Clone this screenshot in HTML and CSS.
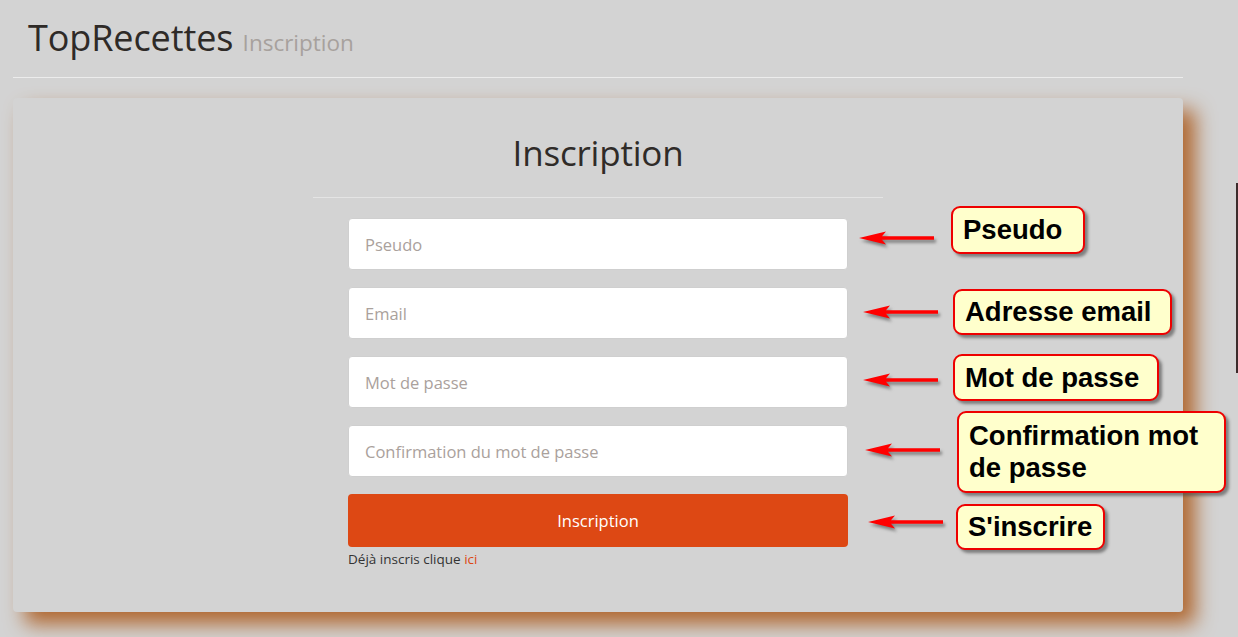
FILE: index.html
```html
<!DOCTYPE html>
<html lang="fr">
<head>
<meta charset="utf-8">
<title>TopRecettes - Inscription</title>
<link rel="stylesheet" href="styles.css">
</head>
<body>
<header class="page-header">
  <h1 class="brand">TopRecettes <small class="brand-sub">Inscription</small></h1>
</header>

<main class="card">
  <h2 class="card-title">Inscription</h2>
  <hr class="card-rule">
  <form class="signup">
    <input class="field" type="text" placeholder="Pseudo">
    <input class="field" type="email" placeholder="Email">
    <input class="field" type="password" placeholder="Mot de passe">
    <input class="field" type="password" placeholder="Confirmation du mot de passe">
    <button class="submit" type="button">Inscription</button>
    <p class="already">Déjà inscris clique <a class="link" href="#">ici</a></p>
  </form>
</main>

<div class="notes">
  <svg class="arrow a1" viewBox="0 0 84 22" width="84" height="22"><polygon points="1,8 28,1.5 24,6.3 76,6.3 76,9.7 24,9.7 28,14.5"/></svg>
  <svg class="arrow a2" viewBox="0 0 84 22" width="84" height="22"><polygon points="1,8 28,1.5 24,6.3 76,6.3 76,9.7 24,9.7 28,14.5"/></svg>
  <svg class="arrow a3" viewBox="0 0 84 22" width="84" height="22"><polygon points="1,8 28,1.5 24,6.3 76,6.3 76,9.7 24,9.7 28,14.5"/></svg>
  <svg class="arrow a4" viewBox="0 0 84 22" width="84" height="22"><polygon points="1,8 28,1.5 24,6.3 76,6.3 76,9.7 24,9.7 28,14.5"/></svg>
  <svg class="arrow a5" viewBox="0 0 84 22" width="84" height="22"><polygon points="1,8 28,1.5 24,6.3 76,6.3 76,9.7 24,9.7 28,14.5"/></svg>

  <div class="callout c1">Pseudo</div>
  <div class="callout c2">Adresse email</div>
  <div class="callout c3">Mot de passe</div>
  <div class="callout c4">Confirmation mot de passe</div>
  <div class="callout c5">S'inscrire</div>
</div>

<div class="edge-line"></div>
</body>
</html>
```

FILE: styles.css
```css
* { box-sizing: border-box; }

html, body {
  margin: 0;
  padding: 0;
  background: #d3d3d3;
}

body {
  position: relative;
  width: 1238px;
  height: 637px;
  overflow: hidden;
  font-family: "Open Sans", "Noto Sans", sans-serif;
  color: #333;
}

/* header */
.page-header {
  width: 1170px;
  margin: 0 0 0 13px;
  padding: 18px 15px 19px;
  border-bottom: 1px solid #ececec;
}

.brand {
  margin: 0;
  height: 40px;
  font-size: 36px;
  line-height: 40px;
  font-weight: 400;
  color: #2e2a27;
  letter-spacing: -0.1px;
}

.brand-sub {
  font-size: 22.5px;
  line-height: 1;
  color: #a7a19d;
  letter-spacing: 0;
}

/* card */
.card {
  width: 1170px;
  height: 514px;
  margin: 20px 0 0 13px;
  padding-top: 35px;
  background: #d3d3d3;
  border-radius: 4px;
  box-shadow: 12px 12px 20px #b0672f;
  display: flex;
  flex-direction: column;
  align-items: center;
}

.card-title {
  margin: 0;
  font-size: 35px;
  line-height: 40px;
  font-weight: 400;
  color: #2f2b28;
  letter-spacing: -0.2px;
}

.card-rule {
  width: 570px;
  margin: 24px 0 20px;
  border: 0;
  border-top: 1px solid #e4e4e4;
}

.signup {
  width: 500px;
  display: flex;
  flex-direction: column;
}

.field {
  height: 52px;
  margin: 0 0 17px;
  padding: 0 16px;
  border: 1px solid #cfcfcf;
  border-radius: 4px;
  background: #fff;
  font-family: inherit;
  font-size: 16.5px;
  color: #333;
  outline: none;
}

.field::placeholder {
  color: #aaa19c;
}

.submit {
  height: 53px;
  margin: 0;
  border: 0;
  border-radius: 4px;
  background: #dd4814;
  color: #fff;
  font-family: inherit;
  font-size: 16.5px;
}

.already {
  margin: 3px 0 0;
  font-size: 13.5px;
  line-height: 18px;
  color: #333;
}

.link {
  color: #dd4814;
  text-decoration: none;
}

/* annotations laid over the page */
.notes {
  position: absolute;
  left: 0;
  top: 0;
}

.arrow {
  position: absolute;
  fill: #ff0000;
  filter: drop-shadow(2px 3px 1.5px rgba(60, 60, 60, 0.55));
  overflow: visible;
}

.a1 { left: 858px; top: 230px; }
.a2 { left: 862px; top: 304px; }
.a3 { left: 862px; top: 372px; }
.a4 { left: 864px; top: 442px; }
.a5 { left: 867px; top: 514px; }

.callout {
  position: absolute;
  display: flex;
  align-items: center;
  padding: 0 8px 0 10px;
  background: #ffffcc;
  border: 2px solid #ee0000;
  border-radius: 9px;
  box-shadow: 3px 3px 3px rgba(70, 70, 70, 0.6);
  font-family: "Liberation Sans", Arial, sans-serif;
  font-weight: 700;
  font-size: 27.5px;
  line-height: 32px;
  color: #000;
}

.c1 { left: 951px; top: 206px; width: 134px; height: 48px; }
.c2 { left: 953px; top: 289px; width: 219px; height: 46px; }
.c3 { left: 953px; top: 354px; width: 206px; height: 47px; }
.c4 { left: 957px; top: 411px; width: 269px; height: 82px; }
.c5 { left: 956px; top: 504px; width: 149px; height: 46px; }

.edge-line {
  position: absolute;
  left: 1236px;
  top: 183px;
  width: 2px;
  height: 190px;
  background: #3b2b2b;
}
```
